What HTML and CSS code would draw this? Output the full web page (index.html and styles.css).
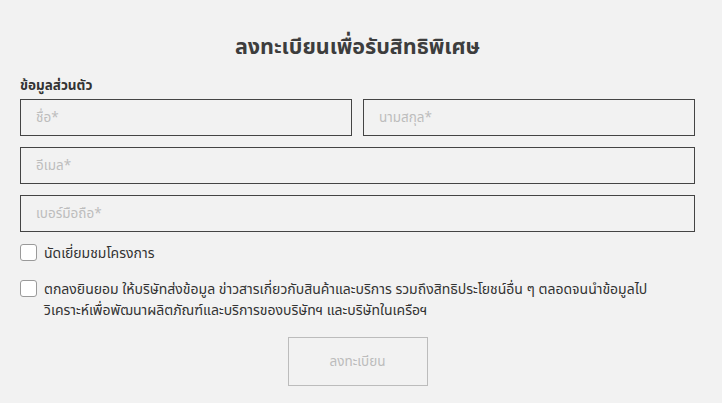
FILE: index.html
```html
<!DOCTYPE html>
<html lang="th">
<head>
<meta charset="utf-8">
<link rel="stylesheet" href="styles.css">
</head>
<body>
<form class="form">
  <h1 class="title">ลงทะเบียนเพื่อรับสิทธิพิเศษ</h1>
  <div class="section-label">ข้อมูลส่วนตัว</div>
  <div class="row two">
    <div class="field"><span class="ph">ชื่อ*</span></div>
    <div class="field"><span class="ph">นามสกุล*</span></div>
  </div>
  <div class="row"><div class="field"><span class="ph">อีเมล*</span></div></div>
  <div class="row"><div class="field"><span class="ph">เบอร์มือถือ*</span></div></div>
  <label class="check first"><span class="box"></span><span class="check-text">นัดเยี่ยมชมโครงการ</span></label>
  <label class="check second"><span class="box"></span><span class="check-text">ตกลงยินยอม ให้บริษัทส่งข้อมูล ข่าวสารเกี่ยวกับสินค้าและบริการ รวมถึงสิทธิประโยชน์อื่น ๆ ตลอดจนนำข้อมูลไป<br>วิเคราะห์เพื่อพัฒนาผลิตภัณฑ์และบริการของบริษัทฯ และบริษัทในเครือฯ</span></label>
  <div class="actions"><div class="btn">ลงทะเบียน</div></div>
</form>
</body>
</html>
```
FILE: styles.css
```css
html, body {
  margin: 0;
  padding: 0;
  background: #f2f2f2;
}
body {
  font-family: "Noto Sans Thai", "Tahoma", "Noto Sans", "DejaVu Sans", sans-serif;
  color: #333;
  width: 722px;
  height: 403px;
  overflow: hidden;
}
.form {
  padding: 31px 27px 0 20px;
  display: flex;
  flex-direction: column;
}
.title {
  margin: 0;
  text-align: center;
  font-size: 21.5px;
  font-weight: bold;
  color: #3d3d3d;
  line-height: 34px;
}
.section-label {
  margin-top: 13px;
  font-size: 13.5px;
  font-weight: bold;
  color: #333;
  line-height: 16px;
  height: 21px;
}
.row {
  display: flex;
  gap: 11px;
  margin-bottom: 11px;
}
.field {
  flex: 1;
  height: 37px;
  box-sizing: border-box;
  border: 1.6px solid #444;
  display: flex;
  align-items: center;
  padding-left: 15px;
}
.ph {
  color: #bdbdbd;
  font-size: 13.5px;
}
.check {
  display: flex;
  align-items: flex-start;
  gap: 7px;
  font-size: 14px;
  color: #333;
  line-height: 21px;
}
.check.second { margin-top: 15px; }
.box {
  flex: none;
  width: 17px;
  height: 17px;
  box-sizing: border-box;
  border: 1px solid #9a9a9a;
  border-radius: 3px;
  background: #fff;
  margin-top: 1px;
}
.actions {
  display: flex;
  justify-content: center;
  margin-top: 16px;
}
.btn {
  width: 140px;
  height: 49px;
  box-sizing: border-box;
  border: 1px solid #bcbcbc;
  color: #bcbcbc;
  font-size: 13.5px;
  display: flex;
  align-items: center;
  justify-content: center;
}
```
